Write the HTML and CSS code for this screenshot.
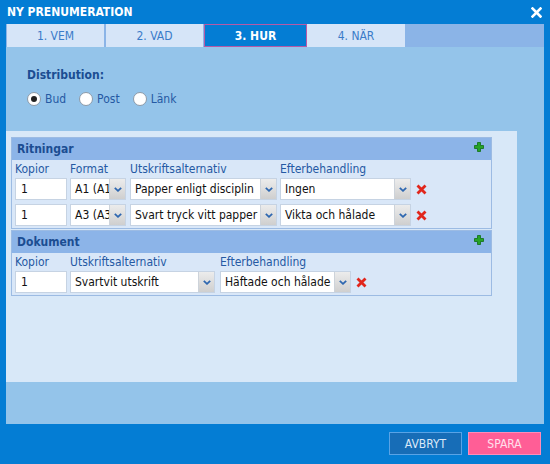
FILE: index.html
```html
<!DOCTYPE html>
<html lang="sv">
<head>
<meta charset="utf-8">
<title>Ny prenumeration</title>
<link rel="stylesheet" href="styles.css">
</head>
<body>
<div class="dialog">
  <div class="titlebar">
    <span class="title">NY PRENUMERATION</span>
    <svg class="close" width="11" height="11" viewBox="0 0 11 11"><path d="M1.5 1.5 L9.5 9.5 M9.5 1.5 L1.5 9.5" stroke="#fff" stroke-width="2.6" stroke-linecap="square"/></svg>
  </div>
  <div class="panel">
    <div class="tabs">
      <div class="tab">1. VEM</div>
      <div class="tab">2. VAD</div>
      <div class="tab active">3. HUR</div>
      <div class="tab">4. NÄR</div>
    </div>
    <div class="dist">
      <div class="dist-label">Distribution:</div>
      <div class="radios">
        <span class="radio"><span class="circle checked"></span>Bud</span>
        <span class="radio"><span class="circle"></span>Post</span>
        <span class="radio"><span class="circle"></span>Länk</span>
      </div>
    </div>
    <div class="inner">
      <div class="box">
        <div class="box-head">
          <span>Ritningar</span>
          <svg class="plus" width="10" height="10" viewBox="0 0 10 10"><path d="M3.5 0.5h3v3h3v3h-3v3h-3v-3h-3v-3h3z" fill="#27a327" stroke="#0f6f14" stroke-width="0.8"/></svg>
        </div>
        <div class="row r-row labels">
          <span class="c-kop">Kopior</span><span class="c-fmt">Format</span><span class="c-utr">Utskriftsalternativ</span><span class="c-eft">Efterbehandling</span>
        </div>
        <div class="row r-row">
          <div class="input c-kop">1</div>
          <div class="select c-fmt"><span class="val">A1 (A1)</span><span class="arrow"><svg width="8" height="5" viewBox="0 0 8 5"><path d="M0.8 0.8 L4 3.8 L7.2 0.8" fill="none" stroke="#2e67b0" stroke-width="1.8"/></svg></span></div>
          <div class="select c-utr"><span class="val">Papper enligt disciplin</span><span class="arrow"><svg width="8" height="5" viewBox="0 0 8 5"><path d="M0.8 0.8 L4 3.8 L7.2 0.8" fill="none" stroke="#2e67b0" stroke-width="1.8"/></svg></span></div>
          <div class="select c-eft"><span class="val">Ingen</span><span class="arrow"><svg width="8" height="5" viewBox="0 0 8 5"><path d="M0.8 0.8 L4 3.8 L7.2 0.8" fill="none" stroke="#2e67b0" stroke-width="1.8"/></svg></span></div>
          <svg class="del" width="11" height="11" viewBox="0 0 11 11"><path d="M1.5 1.5 L9.5 9.5 M9.5 1.5 L1.5 9.5" stroke="#e1261c" stroke-width="2.8"/></svg>
        </div>
        <div class="row r-row">
          <div class="input c-kop">1</div>
          <div class="select c-fmt"><span class="val">A3 (A3)</span><span class="arrow"><svg width="8" height="5" viewBox="0 0 8 5"><path d="M0.8 0.8 L4 3.8 L7.2 0.8" fill="none" stroke="#2e67b0" stroke-width="1.8"/></svg></span></div>
          <div class="select c-utr"><span class="val">Svart tryck vitt papper</span><span class="arrow"><svg width="8" height="5" viewBox="0 0 8 5"><path d="M0.8 0.8 L4 3.8 L7.2 0.8" fill="none" stroke="#2e67b0" stroke-width="1.8"/></svg></span></div>
          <div class="select c-eft"><span class="val">Vikta och hålade</span><span class="arrow"><svg width="8" height="5" viewBox="0 0 8 5"><path d="M0.8 0.8 L4 3.8 L7.2 0.8" fill="none" stroke="#2e67b0" stroke-width="1.8"/></svg></span></div>
          <svg class="del" width="11" height="11" viewBox="0 0 11 11"><path d="M1.5 1.5 L9.5 9.5 M9.5 1.5 L1.5 9.5" stroke="#e1261c" stroke-width="2.8"/></svg>
        </div>
      </div>
      <div class="box">
        <div class="box-head">
          <span>Dokument</span>
          <svg class="plus" width="10" height="10" viewBox="0 0 10 10"><path d="M3.5 0.5h3v3h3v3h-3v3h-3v-3h-3v-3h3z" fill="#27a327" stroke="#0f6f14" stroke-width="0.8"/></svg>
        </div>
        <div class="row d-row labels">
          <span class="c-kop">Kopior</span><span class="c-utd">Utskriftsalternativ</span><span class="c-eft">Efterbehandling</span>
        </div>
        <div class="row d-row">
          <div class="input c-kop">1</div>
          <div class="select c-utd"><span class="val">Svartvit utskrift</span><span class="arrow"><svg width="8" height="5" viewBox="0 0 8 5"><path d="M0.8 0.8 L4 3.8 L7.2 0.8" fill="none" stroke="#2e67b0" stroke-width="1.8"/></svg></span></div>
          <div class="select c-eft"><span class="val">Häftade och hålade</span><span class="arrow"><svg width="8" height="5" viewBox="0 0 8 5"><path d="M0.8 0.8 L4 3.8 L7.2 0.8" fill="none" stroke="#2e67b0" stroke-width="1.8"/></svg></span></div>
          <svg class="del" width="11" height="11" viewBox="0 0 11 11"><path d="M1.5 1.5 L9.5 9.5 M9.5 1.5 L1.5 9.5" stroke="#e1261c" stroke-width="2.8"/></svg>
        </div>
      </div>
    </div>
  </div>
  <div class="footer">
    <button class="btn cancel">AVBRYT</button>
    <button class="btn save">SPARA</button>
  </div>
</div>
</body>
</html>
```

FILE: styles.css
```css
* { box-sizing: border-box; }
html, body { margin: 0; padding: 0; }
body {
  background: #047dd4;
  font-family: "DejaVu Sans Condensed", "DejaVu Sans", sans-serif;
  font-size: 12px;
}
.dialog {
  width: 550px;
  height: 464px;
  display: flex;
  flex-direction: column;
  background: #047dd4;
}
.titlebar {
  height: 24px;
  display: flex;
  align-items: center;
  justify-content: space-between;
  padding: 0 8px 0 7px;
}
.title {
  color: #fff;
  font-weight: bold;
  font-size: 12px;
}
.close { display: block; }
.panel {
  margin: 0 6px;
  height: 400px;
  background: #94c4ea;
  display: flex;
  flex-direction: column;
}
.tabs {
  height: 23px;
  background: #8bb4e7;
  display: flex;
  padding-left: 1px;
}
.tab {
  width: 97px;
  height: 23px;
  margin-right: 2px;
  background: #d6e5f8;
  color: #3a7bc8;
  display: flex;
  align-items: center;
  justify-content: center;
  font-size: 12px;
}
.tab:nth-child(2) { margin-right: 1px; }
.tab.active {
  width: 103px;
  margin-right: 0;
  background: #047dd4;
  color: #fff;
  font-weight: bold;
  border: 1px solid #b75aa6;
}
.tab:last-child { width: 98px; }
.dist {
  height: 84px;
  padding: 21px 0 0 21px;
}
.dist-label {
  color: #1b4d92;
  font-weight: bold;
  line-height: 15px;
}
.radios {
  display: flex;
  align-items: center;
  margin-top: 7px;
  height: 17px;
}
.radio {
  display: flex;
  align-items: center;
  color: #2559a3;
  margin-right: 13px;
}
.circle {
  width: 14px;
  height: 14px;
  border-radius: 50%;
  background: #fff;
  border: 1px solid #8d9aa8;
  margin-right: 4px;
  display: flex;
  align-items: center;
  justify-content: center;
}
.circle.checked::after {
  content: "";
  width: 6px;
  height: 6px;
  border-radius: 50%;
  background: #222;
}
.inner {
  width: 511px;
  height: 251px;
  background: #d8e8f8;
  padding: 6px 0 0 5px;
}
.box {
  width: 481px;
  border: 1px solid #9cbbe3;
  background: #d9e7f8;
  padding-bottom: 2px;
}
.box + .box { margin-top: 1px; }
.box-head {
  height: 22px;
  background: #8cb4e8;
  display: flex;
  align-items: center;
  justify-content: space-between;
  padding: 0 7px 0 5px;
  color: #1b4d92;
  font-weight: bold;
}
.plus { display: block; margin-top: -5px; }
.row {
  display: flex;
  align-items: center;
  padding-left: 3px;
  height: 22px;
  margin-bottom: 4px;
}
.row:last-child { margin-bottom: 0; }
.row.labels {
  height: 18px;
  margin-bottom: 0;
  color: #2559a3;
  padding-bottom: 1px;
}
.row > * { flex: none; }
.c-kop { width: 52px; margin-right: 3px; }
.c-fmt { width: 56px; margin-right: 4px; }
.c-utr { width: 147px; margin-right: 3px; }
.c-utd { width: 145px; margin-right: 5px; }
.c-eft { width: 131px; margin-right: 5px; }
.labels > span { white-space: nowrap; }
.input, .select {
  height: 22px;
  background: #fff;
  border: 1px solid #c6d3e3;
  color: #111;
  display: flex;
  align-items: center;
  overflow: hidden;
  white-space: nowrap;
}
.input { padding-left: 5px; }
.select .val {
  flex: 1;
  min-width: 0;
  padding-left: 4px;
  overflow: hidden;
}
.arrow {
  width: 16px;
  height: 100%;
  flex: none;
  background: linear-gradient(#ececec, #cfcfcf);
  border-left: 1px solid #cdd3da;
  display: flex;
  align-items: center;
  justify-content: center;
}
.arrow svg { display: block; }
.del { display: block; }
.footer {
  flex: 1;
  display: flex;
  justify-content: flex-end;
  align-items: flex-start;
  padding: 8px 9px 0 0;
  gap: 6px;
}
.btn {
  width: 73px;
  height: 23px;
  font-family: "DejaVu Sans Condensed", "DejaVu Sans", sans-serif;
  font-size: 12px;
  padding: 0;
}
.cancel {
  background: #176db7;
  border: 1px solid #59a3e6;
  color: #dbe9f8;
}
.save {
  background: #ff5e96;
  border: 1px solid #ff8cb8;
  color: #ffe0ec;
}
```
